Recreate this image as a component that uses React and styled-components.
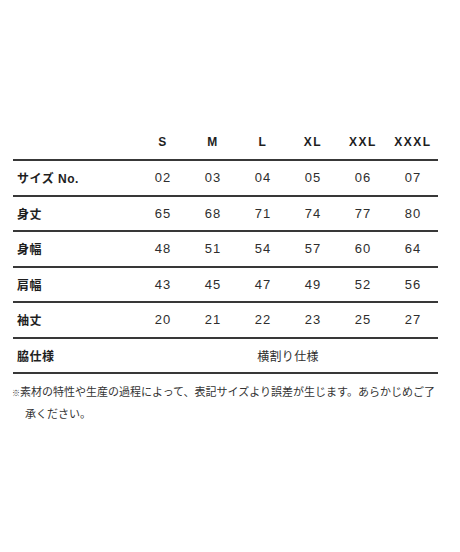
import React from "react";
import styled, { createGlobalStyle } from "styled-components";

const sizes = ["S", "M", "L", "XL", "XXL", "XXXL"];

const rows = [
	{ label: "サイズ No.", values: ["02", "03", "04", "05", "06", "07"] },
	{ label: "身丈", values: ["65", "68", "71", "74", "77", "80"] },
	{ label: "身幅", values: ["48", "51", "54", "57", "60", "64"] },
	{ label: "肩幅", values: ["43", "45", "47", "49", "52", "56"] },
	{ label: "袖丈", values: ["20", "21", "22", "23", "25", "27"] },
];

const GlobalStyle = createGlobalStyle`
	html, body {
		margin: 0;
		padding: 0;
		background: #fff;
	}
	body {
		font-family: "Liberation Sans", "Noto Sans CJK JP", sans-serif;
		color: #2a2a2a;
	}
`;

const App = () => {
	return (
		<Page>
			<GlobalStyle />
			<Table>
				<thead>
					<HeadRow>
						<LabelHead />
						{sizes.map((s) => (
							<SizeHead key={s}>{s}</SizeHead>
						))}
					</HeadRow>
				</thead>
				<tbody>
					{rows.map((row) => (
						<Row key={row.label}>
							<Label>{row.label}</Label>
							{row.values.map((v, i) => (
								<Value key={i}>{v}</Value>
							))}
						</Row>
					))}
					<Row>
						<Label>脇仕様</Label>
						<Spec colSpan={6}>横割り仕様</Spec>
					</Row>
				</tbody>
			</Table>
			<Note>
				<Mark>※</Mark>素材の特性や生産の過程によって、表記サイズより誤差が生じます。あらかじめご了承ください。
			</Note>
		</Page>
	);
};

export default App;

const Page = styled.div`
	width: 460px;
	height: 552px;
	box-sizing: border-box;
	padding: 124px 0 0 13px;
`;

const Table = styled.table`
	border-collapse: collapse;
	table-layout: fixed;
	width: 425px;
`;

const HeadRow = styled.tr`
	border-bottom: 2px solid #383838;
	& > th {
		height: 35px;
	}
`;

const LabelHead = styled.th`
	width: 125px;
	padding: 0;
`;

const SizeHead = styled.th`
	width: 50px;
	padding: 0;
	font-size: 12px;
	font-weight: 700;
	letter-spacing: 1.5px;
	text-align: center;
	color: #1e1e1e;
`;

const Row = styled.tr`
	border-bottom: 2px solid #383838;
	& > td {
		height: 33.5px;
	}
`;

const Label = styled.td`
	padding: 0 0 0 4px;
	font-family: "Liberation Sans", "Noto Sans CJK JP", sans-serif;
	font-size: 12px;
	font-weight: 700;
	letter-spacing: 0.5px;
	color: #1e1e1e;
`;

const Value = styled.td`
	padding: 0;
	text-align: center;
	font-size: 13px;
	letter-spacing: 1px;
	color: #2e2e2e;
`;

const Spec = styled.td`
	padding: 0;
	text-align: center;
	font-family: "Noto Sans CJK JP", sans-serif;
	font-size: 12px;
	letter-spacing: 0.3px;
	color: #2e2e2e;
`;

const Note = styled.p`
	margin: 7px 0 0 -1px;
	padding-left: 13px;
	text-indent: -13px;
	width: 416px;
	font-family: "Noto Sans CJK JP", sans-serif;
	font-size: 11px;
	line-height: 20px;
	color: #333;
`;

const Mark = styled.span`
	font-size: 8px;
`;
